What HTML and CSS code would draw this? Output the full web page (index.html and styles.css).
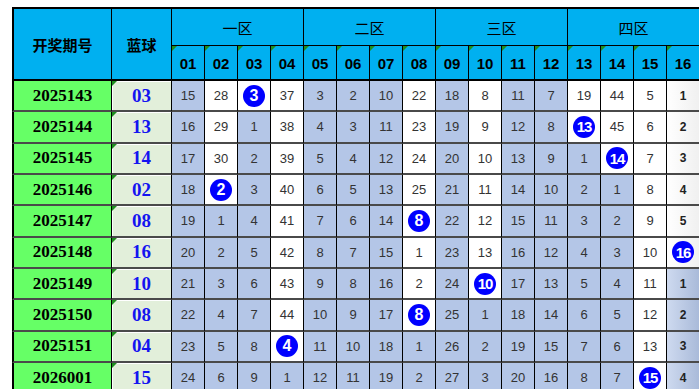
FILE: index.html
```html
<!DOCTYPE html>
<html lang="zh-CN">
<head>
  <meta charset="UTF-8">
  <title>蓝球遗漏</title>
  <link rel="stylesheet" href="styles.css">
</head>
<body>
  <table class="chart">
    <colgroup>
      <col class="c-issue"><col class="c-blue">
      <col class="c-num"><col class="c-num"><col class="c-num"><col class="c-num">
      <col class="c-num"><col class="c-num"><col class="c-num"><col class="c-num">
      <col class="c-num"><col class="c-num"><col class="c-num"><col class="c-num">
      <col class="c-num"><col class="c-num"><col class="c-num"><col class="c-num">
    </colgroup>
    <thead>
      <tr class="zone-row">
        <th rowspan="2" class="first bold">开奖期号</th>
        <th rowspan="2" class="bold">蓝球</th>
        <th colspan="4">一区</th>
        <th colspan="4">二区</th>
        <th colspan="4">三区</th>
        <th colspan="4">四区</th>
      </tr>
      <tr class="num-row">
        <th>01</th><th>02</th><th>03</th><th>04</th>
        <th>05</th><th>06</th><th>07</th><th>08</th>
        <th>09</th><th>10</th><th>11</th><th>12</th>
        <th>13</th><th>14</th><th>15</th><th>16</th>
      </tr>
    </thead>
    <tbody>
      <tr>
        <td class="issue">2025143</td><td class="blue">03</td>
        <td>15</td><td class="w">28</td><td class="w"><span class="ball">3</span></td><td class="w">37</td>
        <td>3</td><td>2</td><td>10</td><td class="w">22</td>
        <td>18</td><td class="w">8</td><td>11</td><td>7</td>
        <td class="w">19</td><td class="w">44</td><td class="w">5</td><td class="w">1</td>
      </tr>
      <tr>
        <td class="issue">2025144</td><td class="blue">13</td>
        <td>16</td><td class="w">29</td><td>1</td><td class="w">38</td>
        <td>4</td><td>3</td><td>11</td><td class="w">23</td>
        <td>19</td><td class="w">9</td><td>12</td><td>8</td>
        <td class="w"><span class="ball two">13</span></td><td class="w">45</td><td class="w">6</td><td class="w">2</td>
      </tr>
      <tr>
        <td class="issue">2025145</td><td class="blue">14</td>
        <td>17</td><td class="w">30</td><td>2</td><td class="w">39</td>
        <td>5</td><td>4</td><td>12</td><td class="w">24</td>
        <td>20</td><td class="w">10</td><td>13</td><td>9</td>
        <td>1</td><td class="w"><span class="ball two">14</span></td><td class="w">7</td><td class="w">3</td>
      </tr>
      <tr>
        <td class="issue">2025146</td><td class="blue">02</td>
        <td>18</td><td class="w"><span class="ball">2</span></td><td>3</td><td class="w">40</td>
        <td>6</td><td>5</td><td>13</td><td class="w">25</td>
        <td>21</td><td class="w">11</td><td>14</td><td>10</td>
        <td>2</td><td>1</td><td class="w">8</td><td class="w">4</td>
      </tr>
      <tr>
        <td class="issue">2025147</td><td class="blue">08</td>
        <td>19</td><td>1</td><td>4</td><td class="w">41</td>
        <td>7</td><td>6</td><td>14</td><td class="w"><span class="ball">8</span></td>
        <td>22</td><td class="w">12</td><td>15</td><td>11</td>
        <td>3</td><td>2</td><td class="w">9</td><td class="w">5</td>
      </tr>
      <tr>
        <td class="issue">2025148</td><td class="blue">16</td>
        <td>20</td><td>2</td><td>5</td><td class="w">42</td>
        <td>8</td><td>7</td><td>15</td><td class="w">1</td>
        <td>23</td><td class="w">13</td><td>16</td><td>12</td>
        <td>4</td><td>3</td><td class="w">10</td><td class="w"><span class="ball two">16</span></td>
      </tr>
      <tr>
        <td class="issue">2025149</td><td class="blue">10</td>
        <td>21</td><td>3</td><td>6</td><td class="w">43</td>
        <td>9</td><td>8</td><td>16</td><td class="w">2</td>
        <td>24</td><td class="w"><span class="ball two">10</span></td><td>17</td><td>13</td>
        <td>5</td><td>4</td><td class="w">11</td><td>1</td>
      </tr>
      <tr>
        <td class="issue">2025150</td><td class="blue">08</td>
        <td>22</td><td>4</td><td>7</td><td class="w">44</td>
        <td>10</td><td>9</td><td>17</td><td class="w"><span class="ball">8</span></td>
        <td>25</td><td>1</td><td>18</td><td>14</td>
        <td>6</td><td>5</td><td class="w">12</td><td>2</td>
      </tr>
      <tr>
        <td class="issue">2025151</td><td class="blue">04</td>
        <td>23</td><td>5</td><td>8</td><td class="w"><span class="ball">4</span></td>
        <td>11</td><td>10</td><td>18</td><td>1</td>
        <td>26</td><td>2</td><td>19</td><td>15</td>
        <td>7</td><td>6</td><td class="w">13</td><td>3</td>
      </tr>
      <tr>
        <td class="issue">2026001</td><td class="blue">15</td>
        <td>24</td><td>6</td><td>9</td><td>1</td>
        <td>12</td><td>11</td><td>19</td><td>2</td>
        <td>27</td><td>3</td><td>20</td><td>16</td>
        <td>8</td><td>7</td><td class="w"><span class="ball two">15</span></td><td>4</td>
      </tr>
    </tbody>
  </table>
</body>
</html>
```

FILE: styles.css
```css
body {
  margin: 7px 0 0 12px;
  background: #fff;
  overflow: hidden;
  font-family: "Liberation Sans", Arial, "Noto Sans CJK SC", sans-serif;
}
.chart {
  border-collapse: separate;
  border-spacing: 0;
  table-layout: fixed;
  width: 688px;
}
.c-issue { width: 100px; }
.c-blue { width: 60px; }
.c-num { width: 33px; }
.chart th,
.chart td {
  box-sizing: border-box;
  padding: 0;
  text-align: center;
  vertical-align: middle;
  border-right: 1px solid #000;
  border-bottom: 1px solid #000;
  position: relative;
}
.chart th {
  background: #00b0f0;
  color: #000;
  font-family: "Noto Sans CJK SC", sans-serif;
  font-size: 15px;
  font-weight: normal;
}
.chart th.bold {
  font-weight: bold;
  border-bottom: 2px solid #000;
}
.chart th.first,
.chart td.issue {
  border-left: 2px solid #000;
}
.zone-row th {
  height: 39px;
  border-top: 2px solid #000;
}
.num-row th {
  height: 35px;
  border-bottom: 2px solid #000;
  font-family: "Liberation Sans", Arial, sans-serif;
  font-weight: bold;
  padding-top: 2px;
}
.num-row th::before,
.chart td.blue::before {
  content: "";
  position: absolute;
  left: 0;
  top: 0;
  border-top: 5px solid #1f8f1f;
  border-right: 5px solid transparent;
}
.chart td {
  height: 31.33px;
  background: #b4c6e7;
  color: #333;
  font-size: 13px;
  border-bottom: 2px solid #4a4a4a;
}
.chart td.w {
  background: #fff;
}
.chart td:last-child {
  font-weight: bold;
  font-size: 12px;
  color: #222;
  background-image: linear-gradient(to right, rgba(255,255,255,0.35), rgba(0,0,0,0.06));
}
.chart td.issue {
  background: #66ff66;
  color: #000;
  font-family: "Liberation Serif", "Times New Roman", serif;
  font-weight: bold;
  font-size: 17px;
}
.chart td.blue {
  background: #e2efda;
  color: #1414f0;
  font-family: "Liberation Serif", "Times New Roman", serif;
  font-weight: bold;
  font-size: 19px;
  box-shadow: inset 1px 1px 0 #fff;
}
.ball {
  display: inline-flex;
  align-items: center;
  justify-content: center;
  width: 22px;
  height: 22px;
  border-radius: 50%;
  background: #0000ff;
  color: #fff;
  font-size: 16px;
  font-weight: bold;
  vertical-align: middle;
}
.ball.two {
  font-size: 15px;
  letter-spacing: -1px;
}
```
